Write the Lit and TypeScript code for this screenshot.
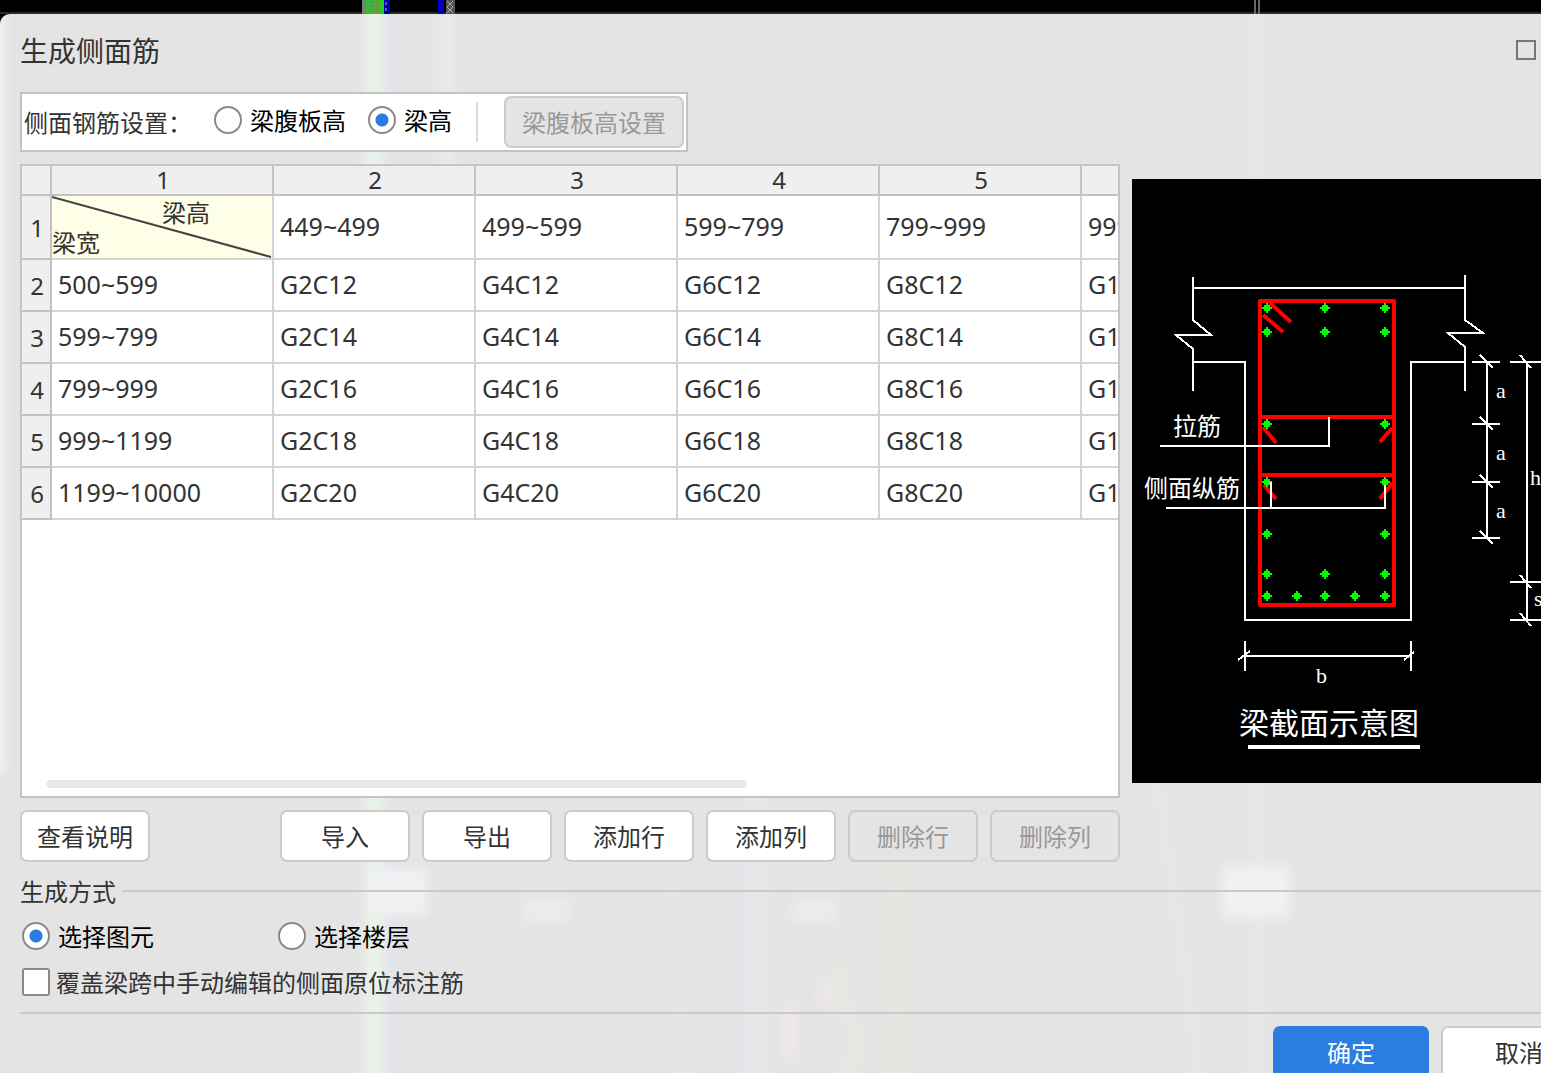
import { LitElement, html, svg, css } from "lit";
import { customElement, state } from "lit/decorators.js";

const COLUMNS = ["449~499", "499~599", "599~799", "799~999", "999~1199"];
const WIDTHS = [
  { range: "500~599", bar: "12" },
  { range: "599~799", bar: "14" },
  { range: "799~999", bar: "16" },
  { range: "999~1199", bar: "18" },
  { range: "1199~10000", bar: "20" },
];
const COUNTS = ["2", "4", "6", "8", "10"];

@customElement("beam-section")
class BeamSection extends LitElement {
  static styles = css`
    :host {
      display: block;
      background: #000;
    }
    .figure {
      display: block;
      width: 465px;
      height: 604px;
    }
    .line {
      fill: none;
      stroke: #fff;
      stroke-width: 2;
      shape-rendering: crispEdges;
    }
    .under {
      stroke-width: 4;
    }
    .steel {
      fill: none;
      stroke: #f00;
      stroke-width: 4;
      stroke-linejoin: round;
    }
    .dot {
      fill: #0f0;
      shape-rendering: crispEdges;
    }
    .label {
      fill: #fff;
      font: 24px "Noto Sans CJK SC", sans-serif;
    }
    .title {
      fill: #fff;
      font: 30px "Noto Sans CJK SC", sans-serif;
    }
    .mark {
      fill: #fff;
      font: 22px "Liberation Serif", serif;
    }
  `;

  private dots = [
    [135, 129], [193, 129], [253, 129],
    [135, 153], [193, 153], [253, 153],
    [135, 245], [253, 245],
    [135, 303], [253, 303],
    [135, 355], [253, 355],
    [135, 395], [193, 395], [253, 395],
    [135, 417], [165, 417], [193, 417], [223, 417], [253, 417],
  ];

  render() {
    return html`
      <svg class="figure" viewBox="0 0 465 604" role="img" aria-label="梁截面示意图">
        <path class="line" d="M61 98V141L79 156H44L61 170V212M61 109H333M333 96V141L351 154H316L333 168V212" />
        <path class="line" d="M61 183H113V441H279V183H333" />
        <path class="steel" d="M128 122H262V426H128ZM128 238H262M128 296H262" />
        <path class="steel" d="M138 124L159 143M131 136L151 153M131 248L144 264M260 249L248 263M132 306L144 320M260 304L248 320" />
        ${this.dots.map(
          ([x, y]) => svg`<path class="dot" d="M${x - 1} ${y - 5}h2v2h2v2h2v2h-2v2h-2v2h-2v-2h-2v-2h-2v-2h2v-2h2z" />`
        )}
        <path class="line" d="M28 267H197V238M34 329H253V306M139 329V303" />
        <path class="line" d="M355 183V359M340 183H368M340 245H368M340 303H368M340 359H368M348 176L361 189M348 238L361 251M348 296L361 309M348 352L361 365" />
        <path class="line" d="M395 183V441M378 183H409M378 403H409M378 441H409M388 176L399 189M388 396L399 409M388 434L399 447" />
        <path class="line" d="M113 477H279M113 462V492M279 462V492M106 481L118 472M272 481L282 473" />
        <text class="label" x="41" y="256">拉筋</text>
        <text class="label" x="12" y="318">侧面纵筋</text>
        <text class="mark" x="364" y="219">a</text>
        <text class="mark" x="364" y="281">a</text>
        <text class="mark" x="364" y="339">a</text>
        <text class="mark" x="398" y="306">h</text>
        <text class="mark" x="402" y="427">s</text>
        <text class="mark" x="184" y="504">b</text>
        <text class="title" x="107" y="555">梁截面示意图</text>
        <path class="line under" d="M116 568H288" />
      </svg>
    `;
  }
}

@customElement("app-root")
class AppRoot extends LitElement {
  static styles = css`
    :host {
      display: block;
      height: 100vh;
      overflow: hidden;
      position: relative;
      background: #000;
      color: #333;
      font: 24px/32px "Noto Sans CJK SC", sans-serif;
    }
    * {
      box-sizing: border-box;
    }
    .strip {
      display: block;
      width: 100%;
      height: 14px;
    }
    .dialog {
      position: relative;
      display: flex;
      flex-direction: column;
      margin-right: -76px;
      min-height: calc(100vh + 11px);
      padding: 0 20px 20px;
      border-radius: 10px 10px 0 0;
      background: #e4e4e4;
      overflow: hidden;
    }
    .haze {
      position: absolute;
      inset: 0;
      width: 100%;
      height: 100%;
      pointer-events: none;
    }
    .head,
    .setup,
    .work,
    .group,
    .foot {
      position: relative;
    }
    .head {
      display: flex;
      align-items: center;
      justify-content: space-between;
      height: 78px;
      padding-bottom: 6px;
    }
    .title {
      margin: 0;
      font-size: 28px;
      font-weight: 400;
      line-height: 40px;
    }
    .window {
      display: flex;
      gap: 41px;
    }
    .icon {
      width: 20px;
      height: 20px;
      padding: 0;
      border: 0;
      background: none;
    }
    .icon svg {
      display: block;
      fill: none;
      stroke: #777;
      stroke-width: 2;
    }
    .setup {
      display: flex;
      align-items: center;
      align-self: flex-start;
      height: 60px;
      padding: 0 2px;
      border: 2px solid #c2c3c7;
      background: #fff;
    }
    .caption {
      width: 190px;
    }
    .choice {
      display: flex;
      align-items: center;
      gap: 8px;
      height: 28px;
      color: #000;
    }
    .setup .choice {
      margin-right: 22px;
      margin-bottom: 4px;
    }
    .choice.plain {
      color: #333;
      gap: 6px;
    }
    .mark {
      appearance: none;
      width: 28px;
      height: 28px;
      margin: 0;
      border: 2px solid #8a8a8a;
      background: #fff;
    }
    .radio {
      border-radius: 50%;
    }
    .radio:checked {
      background: radial-gradient(circle, #2b7de1 6px, #fff 7px);
    }
    .check {
      border-radius: 3px;
    }
    .check:checked {
      background: #2b7de1;
    }
    .bar {
      width: 2px;
      height: 40px;
      margin: 0 26px 0 2px;
      background: #dcdcdc;
    }
    .button {
      height: 52px;
      width: 130px;
      padding: 0;
      border: 2px solid #cbcbcb;
      border-radius: 7px;
      background: #fff;
      color: #333;
      font: inherit;
    }
    .button:disabled {
      background: #e4e4e4;
      color: #999;
    }
    .wide {
      width: 180px;
    }
    .work {
      flex: 1;
      display: grid;
      grid-template-columns: minmax(0, 1fr) auto;
      grid-template-rows: 1fr auto;
      gap: 12px;
      margin-top: 12px;
      align-items: center;
    }
    .frame {
      align-self: stretch;
      display: flex;
      flex-direction: column;
      justify-content: space-between;
      overflow: hidden;
      border: 2px solid #c4c4c4;
      background: #fff;
    }
    .scroll {
      width: 64%;
      height: 8px;
      margin: 0 24px 8px;
      border-radius: 4px;
      background: #e9e9e9;
    }
    .grid {
      width: 1262px;
      table-layout: fixed;
      border-spacing: 0;
      font-family: "Noto Sans", "Noto Sans CJK SC", sans-serif;
    }
    .grid th,
    .grid td {
      height: 52px;
      padding: 0 6px 2px;
      border: solid #d4d4d4;
      border-width: 0 2px 2px 0;
      font-size: 25px;
      font-weight: 400;
      line-height: 32px;
      text-align: left;
      white-space: nowrap;
    }
    .grid thead th,
    .grid .index {
      border-color: #c2c2c2;
      background: #efefef;
      font-size: 24px;
      text-align: center;
    }
    .grid thead th {
      height: 30px;
      padding: 0 0 0 2px;
      line-height: 28px;
    }
    .grid .index {
      padding: 2px 0 0 2px;
    }
    .grid .first > * {
      height: 64px;
    }
    .narrow {
      width: 30px;
    }
    .lead {
      width: 222px;
    }
    .grid .corner {
      position: relative;
      padding: 0;
      background: #fffee6;
      font-size: 24px;
      line-height: 30px;
    }
    .slash {
      position: absolute;
      inset: 0;
      width: 100%;
      height: 100%;
      stroke: #444;
      stroke-width: 2;
    }
    .across {
      display: block;
      padding: 2px 0 0 110px;
    }
    .down {
      display: block;
    }
    .actions {
      display: flex;
      gap: 12px;
    }
    .first-action {
      margin-right: auto;
    }
    .group {
      margin-top: 13px;
    }
    .legend {
      display: flex;
      align-items: center;
      gap: 6px;
    }
    .rule {
      flex: 1;
      height: 2px;
      background: #c9c9c9;
    }
    .options {
      display: grid;
      grid-template-columns: 256px auto;
      justify-content: start;
      row-gap: 18px;
      padding: 15px 2px 16px;
    }
    .span {
      grid-column: 1 / -1;
    }
    .foot {
      display: flex;
      justify-content: flex-end;
      gap: 12px;
      padding-top: 12px;
      border-top: 2px solid #c9c9c9;
    }
    .foot .button {
      width: 156px;
    }
    .foot .primary {
      border-color: #2b7de1;
      background: #2b7de1;
      color: #fff;
    }
  `;

  @state() private basis = "depth";
  @state() private mode = "element";

  private radio(name: string, id: string, text: string, current: string, pick: (v: string) => void) {
    return html`<label class="choice">
      <input class="mark radio" type="radio" name=${name} .checked=${current === id} @change=${() => pick(id)} />${text}
    </label>`;
  }

  render() {
    const basis = (v: string) => (this.basis = v);
    const mode = (v: string) => (this.mode = v);
    return html`
      <svg class="strip" aria-hidden="true">
        <rect y="12" width="100%" height="2" fill="#2a2a2a" />
        <rect x="362" width="6" height="14" fill="#6f8a6f" />
        <rect x="366" width="12" height="14" fill="#35bd35" />
        <path d="M369 2h4M369 6h6M371 10h4" stroke="#5f8f5f" stroke-width="2" />
        <rect x="376" width="4" height="14" fill="#6d9a3a" />
        <rect x="380" width="4" height="14" fill="#22d022" />
        <rect x="384" width="6" height="14" fill="#0000a8" />
        <path d="M386 2v3M386 8v3" stroke="#5555b8" stroke-width="2" />
        <rect x="438" width="6" height="14" fill="#0000b8" />
        <rect x="446" width="9" height="14" fill="#555" />
        <path d="M447 1l6 6l-6 6M453 1l-6 6l6 6" stroke="#aaa" fill="none" />
        <path d="M1255 0V14M1259 0V14" stroke="#666" stroke-width="2" />
      </svg>
      <main class="dialog">
        <svg class="haze" aria-hidden="true">
          <defs>
            <filter id="soft" x="-50%" y="-50%" width="200%" height="200%">
              <feGaussianBlur stdDeviation="5" />
            </filter>
          </defs>
          <g filter="url(#soft)">
            <rect x="-10" y="-10" width="15" height="770" fill="#f2f2f2" />
            <rect x="364" y="-20" width="20" height="1200" fill="#e9f3e8" />
            <rect x="387" y="-20" width="12" height="1200" fill="#e3e3eb" />
            <rect x="438" y="-20" width="18" height="300" fill="#e8e8ee" />
            <rect x="744" y="760" width="11" height="400" fill="#e6e6ee" />
            <rect x="755" y="760" width="12" height="400" fill="#e7e7e7" />
            <rect x="886" y="760" width="20" height="400" fill="#e6e5e1" />
            <rect x="1250" y="-20" width="14" height="1200" fill="#e7e7e7" />
            <path d="M668 840Q676 940 682 1080" stroke="#e6e6e6" stroke-width="8" fill="none" />
            <path d="M1158 770Q1176 900 1200 1060" stroke="#e7e7e7" stroke-width="8" fill="none" />
            <rect x="368" y="854" width="60" height="48" fill="#f0f0f3" />
            <rect x="1222" y="852" width="68" height="52" fill="#f1f1f1" />
            <rect x="522" y="884" width="48" height="24" fill="#ebebeb" />
            <rect x="792" y="884" width="46" height="24" fill="#ebebeb" />
            <ellipse cx="790" cy="1018" rx="9" ry="34" fill="#efe8e8" />
            <ellipse cx="825" cy="980" rx="10" ry="14" fill="#ede7e7" />
            <path d="M840 950V980L860 1030L845 1060" stroke="#e7e7e3" stroke-width="14" fill="none" />
          </g>
        </svg>

        <header class="head">
          <h1 class="title">生成侧面筋</h1>
          <div class="window">
            <button class="icon" type="button" aria-label="最大化">
              <svg width="20" height="20"><rect x="1" y="1" width="18" height="18" /></svg>
            </button>
            <button class="icon" type="button" aria-label="关闭">
              <svg width="20" height="20"><path d="M1 1L19 19M19 1L1 19" /></svg>
            </button>
          </div>
        </header>

        <section class="setup">
          <span class="caption">侧面钢筋设置：</span>
          ${this.radio("basis", "web", "梁腹板高", this.basis, basis)}
          ${this.radio("basis", "depth", "梁高", this.basis, basis)}
          <span class="bar"></span>
          <button class="button wide" type="button" disabled>梁腹板高设置</button>
        </section>

        <section class="work">
          <div class="frame">
            <table class="grid">
              <colgroup>
                <col class="narrow" />
                <col class="lead" />
                ${COLUMNS.map(() => html`<col />`)}
              </colgroup>
              <thead>
                <tr>
                  <th></th>
                  ${[1, 2, 3, 4, 5].map((n) => html`<th scope="col">${n}</th>`)}
                  <th></th>
                </tr>
              </thead>
              <tbody>
                <tr class="first">
                  <th class="index" scope="row">1</th>
                  <td class="corner">
                    <svg class="slash" viewBox="0 0 220 62" preserveAspectRatio="none" aria-hidden="true">
                      <path d="M0 1L219 61" />
                    </svg>
                    <span class="across">梁高</span>
                    <span class="down">梁宽</span>
                  </td>
                  ${COLUMNS.map((c) => html`<td>${c}</td>`)}
                </tr>
                ${WIDTHS.map(
                  (w, i) => html`<tr>
                    <th class="index" scope="row">${i + 2}</th>
                    <td>${w.range}</td>
                    ${COUNTS.map((n) => html`<td>G${n}C${w.bar}</td>`)}
                  </tr>`
                )}
              </tbody>
            </table>
            <div class="scroll"></div>
          </div>
          <beam-section></beam-section>
          <div class="actions">
            <button class="button first-action" type="button">查看说明</button>
            <button class="button" type="button">导入</button>
            <button class="button" type="button">导出</button>
            <button class="button" type="button">添加行</button>
            <button class="button" type="button">添加列</button>
            <button class="button" type="button" disabled>删除行</button>
            <button class="button" type="button" disabled>删除列</button>
          </div>
        </section>

        <section class="group" role="group" aria-labelledby="mode-title">
          <div class="legend"><span id="mode-title">生成方式</span><span class="rule"></span></div>
          <div class="options">
            ${this.radio("mode", "element", "选择图元", this.mode, mode)}
            ${this.radio("mode", "floor", "选择楼层", this.mode, mode)}
            <label class="choice plain span">
              <input class="mark check" type="checkbox" />覆盖梁跨中手动编辑的侧面原位标注筋
            </label>
          </div>
        </section>

        <footer class="foot">
          <button class="button primary" type="button">确定</button>
          <button class="button" type="button">取消</button>
        </footer>
      </main>
    `;
  }
}
